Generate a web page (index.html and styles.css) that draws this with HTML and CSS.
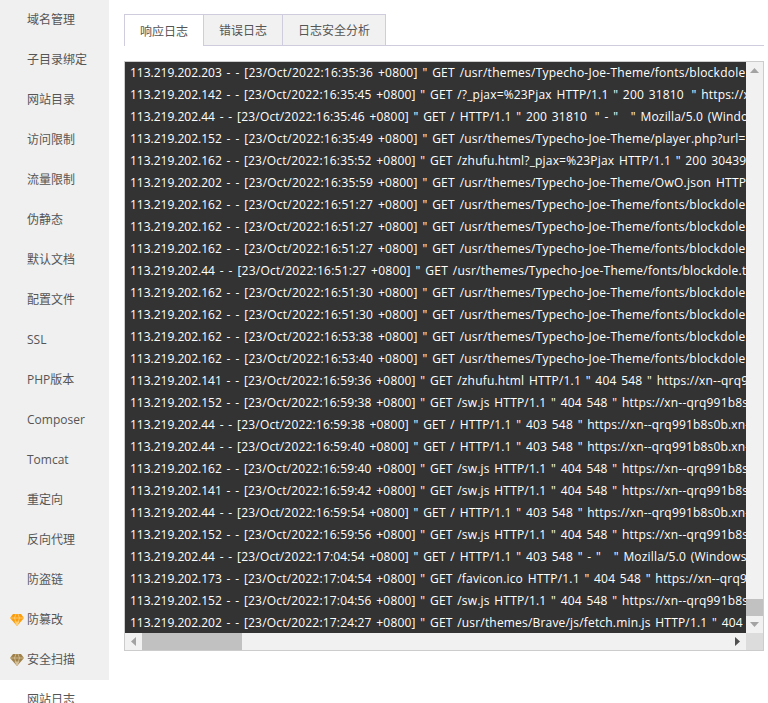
FILE: index.html
```html
<!DOCTYPE html>
<html lang="zh-CN">
<head>
<meta charset="utf-8">
<title>网站日志</title>
<link rel="stylesheet" href="styles.css">
</head>
<body>
<div class="page">
  <nav class="side">
    <div class="side-group">
      <a class="item">域名管理</a>
      <a class="item">子目录绑定</a>
      <a class="item">网站目录</a>
      <a class="item">访问限制</a>
      <a class="item">流量限制</a>
      <a class="item">伪静态</a>
      <a class="item">默认文档</a>
      <a class="item">配置文件</a>
      <a class="item">SSL</a>
      <a class="item">PHP版本</a>
      <a class="item">Composer</a>
      <a class="item">Tomcat</a>
      <a class="item">重定向</a>
      <a class="item">反向代理</a>
      <a class="item">防盗链</a>
      <a class="item"><svg class="gem gold" viewBox="0 0 14 12"><path class="g-body" d="M3 0h8l3 4-7 8-7-8z"/><path class="g-tip" d="M4.500 7.500h5L7 12z"/><path class="g-line" d="M0 4h14M4.500 4L7 11.500L9.500 4M4.500 4L6 0M9.500 4L8 0"/></svg>防篡改</a>
      <a class="item"><svg class="gem bronze" viewBox="0 0 14 12"><path class="g-body" d="M3 0h8l3 4-7 8-7-8z"/><path class="g-tip" d="M4.500 7.500h5L7 12z"/><path class="g-line" d="M0 4h14M4.500 4L7 11.500L9.500 4M4.500 4L6 0M9.500 4L8 0"/></svg>安全扫描</a>
    </div>
    <a class="item active">网站日志</a>
  </nav>
  <main class="main">
    <div class="tabs">
      <span class="tab on">响应日志</span>
      <span class="tab">错误日志</span>
      <span class="tab">日志安全分析</span>
    </div>
    <div class="logbox">
      <div class="upper">
        <div class="log">
<div class="row long"><span class="ip">113.219.202.203</span> - - [23/Oct/2022:16:35:36 +0800] " GET /usr/themes/Typecho-Joe-Theme/fonts/blockdole.ttf HTTP/1.1 "</div>
<div class="row"><span class="ip">113.219.202.142</span> - - [23/Oct/2022:16:35:45 +0800] " GET /?_pjax=%23Pjax HTTP/1.1 " 200 31810 <span class="ref">" https://xn--qrq991b8s0b.xn</span></div>
<div class="row"><span class="ip">113.219.202.44</span> - - [23/Oct/2022:16:35:46 +0800] " GET / HTTP/1.1 " 200 31810 <span class="ref">" - "</span> <span class="ua">" Mozilla/5.0 (Windows NT 10.0)</span></div>
<div class="row long"><span class="ip">113.219.202.152</span> - - [23/Oct/2022:16:35:49 +0800] " GET /usr/themes/Typecho-Joe-Theme/player.php?url=https://xn--qrq991b8s0b</div>
<div class="row"><span class="ip">113.219.202.162</span> - - [23/Oct/2022:16:35:52 +0800] " GET /zhufu.html?_pjax=%23Pjax HTTP/1.1 " 200 30439 " https://xn--qrq</div>
<div class="row long"><span class="ip">113.219.202.202</span> - - [23/Oct/2022:16:35:59 +0800] " GET /usr/themes/Typecho-Joe-Theme/OwO.json HTTP/1.1 " 200 5120</div>
<div class="row long"><span class="ip">113.219.202.162</span> - - [23/Oct/2022:16:51:27 +0800] " GET /usr/themes/Typecho-Joe-Theme/fonts/blockdole.ttf HTTP/1.1 "</div>
<div class="row long"><span class="ip">113.219.202.162</span> - - [23/Oct/2022:16:51:27 +0800] " GET /usr/themes/Typecho-Joe-Theme/fonts/blockdole.ttf HTTP/1.1 "</div>
<div class="row long"><span class="ip">113.219.202.162</span> - - [23/Oct/2022:16:51:27 +0800] " GET /usr/themes/Typecho-Joe-Theme/fonts/blockdole.ttf HTTP/1.1 "</div>
<div class="row long"><span class="ip">113.219.202.44</span> - - [23/Oct/2022:16:51:27 +0800] " GET /usr/themes/Typecho-Joe-Theme/fonts/blockdole.ttf HTTP/1.1 "</div>
<div class="row long"><span class="ip">113.219.202.162</span> - - [23/Oct/2022:16:51:30 +0800] " GET /usr/themes/Typecho-Joe-Theme/fonts/blockdole.ttf HTTP/1.1 "</div>
<div class="row long"><span class="ip">113.219.202.162</span> - - [23/Oct/2022:16:51:30 +0800] " GET /usr/themes/Typecho-Joe-Theme/fonts/blockdole.ttf HTTP/1.1 "</div>
<div class="row long"><span class="ip">113.219.202.162</span> - - [23/Oct/2022:16:53:38 +0800] " GET /usr/themes/Typecho-Joe-Theme/fonts/blockdole.ttf HTTP/1.1 "</div>
<div class="row long"><span class="ip">113.219.202.162</span> - - [23/Oct/2022:16:53:40 +0800] " GET /usr/themes/Typecho-Joe-Theme/fonts/blockdole.ttf HTTP/1.1 "</div>
<div class="row"><span class="ip">113.219.202.141</span> - - [23/Oct/2022:16:59:36 +0800] " GET /zhufu.html HTTP/1.1 " 404 548 " https://xn--qrq991b8s0b.xn</div>
<div class="row"><span class="ip">113.219.202.152</span> - - [23/Oct/2022:16:59:38 +0800] " GET /sw.js HTTP/1.1 " 404 548 " https://xn--qrq991b8s0b.xn</div>
<div class="row"><span class="ip">113.219.202.44</span> - - [23/Oct/2022:16:59:38 +0800] " GET / HTTP/1.1 " 403 548 " https://xn--qrq991b8s0b.xn--fiqs8s</div>
<div class="row"><span class="ip">113.219.202.44</span> - - [23/Oct/2022:16:59:40 +0800] " GET / HTTP/1.1 " 403 548 " https://xn--qrq991b8s0b.xn--fiqs8s</div>
<div class="row"><span class="ip">113.219.202.162</span> - - [23/Oct/2022:16:59:40 +0800] " GET /sw.js HTTP/1.1 " 404 548 " https://xn--qrq991b8s0b.xn</div>
<div class="row"><span class="ip">113.219.202.141</span> - - [23/Oct/2022:16:59:42 +0800] " GET /sw.js HTTP/1.1 " 404 548 " https://xn--qrq991b8s0b.xn</div>
<div class="row"><span class="ip">113.219.202.44</span> - - [23/Oct/2022:16:59:54 +0800] " GET / HTTP/1.1 " 403 548 " https://xn--qrq991b8s0b.xn--fiqs8s</div>
<div class="row"><span class="ip">113.219.202.152</span> - - [23/Oct/2022:16:59:56 +0800] " GET /sw.js HTTP/1.1 " 404 548 " https://xn--qrq991b8s0b.xn</div>
<div class="row"><span class="ip">113.219.202.44</span> - - [23/Oct/2022:17:04:54 +0800] " GET / HTTP/1.1 " 403 548 " - " <span class="ua">" Mozilla/5.0 (Windows NT 10.0)</span></div>
<div class="row"><span class="ip">113.219.202.173</span> - - [23/Oct/2022:17:04:54 +0800] " GET /favicon.ico HTTP/1.1 " 404 548 " https://xn--qrq991b8s0b.xn</div>
<div class="row"><span class="ip">113.219.202.152</span> - - [23/Oct/2022:17:04:56 +0800] " GET /sw.js HTTP/1.1 " 404 548 " https://xn--qrq991b8s0b.xn</div>
<div class="row"><span class="ip">113.219.202.202</span> - - [23/Oct/2022:17:24:27 +0800] " GET /usr/themes/Brave/js/fetch.min.js HTTP/1.1 " 404 548</div>
        </div>
        <div class="vbar">
          <svg class="arrow" viewBox="0 0 9 5"><path d="M4.500 0l4.500 5H0z"/></svg>
          <div class="vtrack"><div class="vthumb"></div></div>
          <svg class="arrow" viewBox="0 0 9 5"><path d="M0 0h9L4.500 5z"/></svg>
        </div>
      </div>
      <div class="hbar">
        <svg class="arrow-h" viewBox="0 0 5 9"><path d="M5 0v9L0 4.500z"/></svg>
        <div class="htrack"><div class="hthumb"></div></div>
        <svg class="arrow-h dark" viewBox="0 0 5 9"><path d="M0 0v9l5-4.500z"/></svg>
        <div class="corner"></div>
      </div>
    </div>
  </main>
</div>
</body>
</html>
```
FILE: styles.css
```css
* { box-sizing: border-box; }
html, body { margin: 0; height: 703px; overflow: hidden; background: #fff; }
body { font-family: "Open Sans", "Noto Sans CJK SC", sans-serif; font-size: 12px; color: #555; }
.page { display: flex; align-items: flex-start; height: 703px; overflow: hidden; }
.side { width: 109px; flex: none; display: flex; flex-direction: column; }
.side-group { background: #f0f0f0; }
.item { display: flex; align-items: center; height: 40px; padding: 0 0 2px 27px; position: relative; color: #555; white-space: nowrap; }
.active { background: #fff; }
.gem { position: absolute; left: 10px; top: 14px; width: 14px; height: 12px; }
.g-line { fill: none; stroke-width: .7; }
.gold .g-body { fill: #fb9d0c; }
.gold .g-tip { fill: #ffc861; }
.gold .g-line { stroke: #ffd88f; }
.bronze .g-body { fill: #a0814a; }
.bronze .g-tip { fill: #cdb98f; }
.bronze .g-line { stroke: #dccba8; }
.main { flex: 1; padding: 14px 4px 0 15px; min-width: 0; }
.tabs { display: flex; height: 32px; border-bottom: 1px solid #cfcddd; }
.tab { height: 32px; padding: 0 15px; display: flex; align-items: center; background: #f1f1f1; border: 1px solid #cfcddd; border-left: 0; color: #555; }
.tab.on { background: #fff; border-left: 1px solid #cfcddd; border-bottom: 0; width: 80px; }
.tab:nth-child(2) { width: 79px; }
.tab:nth-child(3) { width: 103px; }
.logbox { margin-top: 15px; height: 590px; width: 640px; border: 1px solid #ccc; display: flex; flex-direction: column; }
.upper { display: flex; height: 571px; }
.log { width: 621px; background: #333; overflow: hidden; padding: 0 0 0 5px; color: #fff; letter-spacing: .18px; word-spacing: 1.4px; }
.ip { letter-spacing: 0; }
.ref { margin-left: 3px; }
.ua { margin-left: 8px; }
.row { height: 22px; line-height: 22px; white-space: nowrap; }
.row.long { letter-spacing: .24px; }
.vbar { width: 17px; background: #f1f1f1; display: flex; flex-direction: column; align-items: center; }
.arrow { width: 9px; height: 5px; margin: 6px 0; fill: #a3a3a3; flex: none; }
.vtrack { flex: 1; width: 100%; display: flex; flex-direction: column; justify-content: flex-end; }
.vthumb { height: 17px; background: #c1c1c1; width: 100%; }
.hbar { height: 17px; background: #f1f1f1; display: flex; align-items: center; }
.arrow-h { width: 5px; height: 9px; margin: 0 6px; fill: #a3a3a3; flex: none; }
.arrow-h.dark { fill: #505050; }
.htrack { flex: 1; height: 100%; }
.hthumb { width: 100px; height: 100%; background: #c1c1c1; }
.corner { width: 17px; height: 17px; background: #dcdcdc; flex: none; }
```
